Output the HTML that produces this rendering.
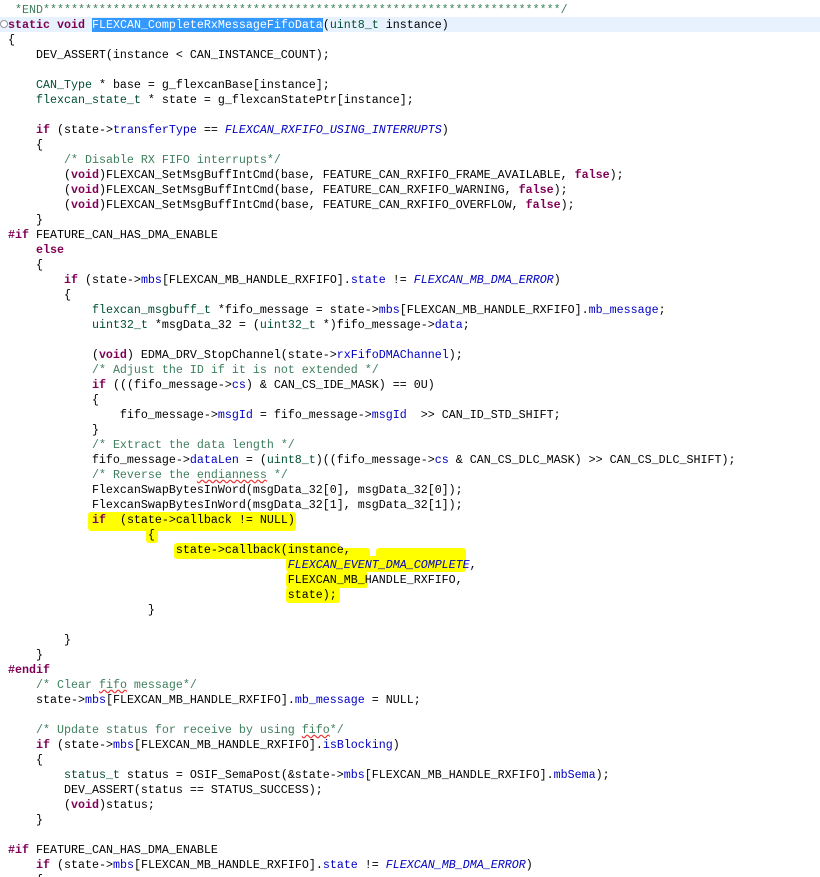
<!DOCTYPE html>
<html><head><meta charset="utf-8"><style>
html,body{margin:0;padding:0;background:#fff;width:820px;height:877px;overflow:hidden;position:relative}
pre{margin:0;position:absolute;left:8px;top:3px;font-family:"Liberation Mono",monospace;font-size:11.67px;line-height:15px;color:#000;z-index:2}
.k{color:#7f0055;font-weight:bold}
.t{color:#005032}
.f{color:#0000c0}
.e{color:#0000c0;font-style:italic}
.c{color:#3f7f5f}
.sel{background:#3399ff;color:#fff}
.sq{text-decoration:underline wavy #e33;text-decoration-skip-ink:none}
.hl{position:absolute;background:#ffff00;z-index:1;border-radius:3px}
.cur{position:absolute;left:0;top:17px;width:820px;height:15px;background:#e8f2fe;z-index:0}
</style></head><body>
<div class="cur"></div>
<div class="hl" style="left:88px;top:512px;width:208px;height:19px"></div>
<div class="hl" style="left:146px;top:529px;width:12px;height:14px"></div>
<div class="hl" style="left:174px;top:543px;width:166px;height:16px"></div>
<div class="hl" style="left:318px;top:548px;width:52px;height:16px"></div>
<div class="hl" style="left:286px;top:556px;width:180px;height:16px"></div>
<div class="hl" style="left:376px;top:548px;width:90px;height:12px"></div>
<div class="hl" style="left:286px;top:572px;width:82px;height:16px"></div>
<div class="hl" style="left:286px;top:587px;width:54px;height:16px"></div>
<div style="position:absolute;left:0;top:20px;width:8px;height:8px;border:1px solid #999;border-radius:50%;box-sizing:border-box;background:#fff;z-index:3"></div>
<pre><span class="c"> *END**************************************************************************/</span>
<span class="k">static</span> <span class="k">void</span> <span class="sel">FLEXCAN_CompleteRxMessageFifoData</span>(<span class="t">uint8_t</span> instance)
{
    DEV_ASSERT(instance &lt; CAN_INSTANCE_COUNT);

    <span class="t">CAN_Type</span> * base = g_flexcanBase[instance];
    <span class="t">flexcan_state_t</span> * state = g_flexcanStatePtr[instance];

    <span class="k">if</span> (state-&gt;<span class="f">transferType</span> == <span class="e">FLEXCAN_RXFIFO_USING_INTERRUPTS</span>)
    {
        <span class="c">/* Disable RX FIFO interrupts*/</span>
        (<span class="k">void</span>)FLEXCAN_SetMsgBuffIntCmd(base, FEATURE_CAN_RXFIFO_FRAME_AVAILABLE, <span class="k">false</span>);
        (<span class="k">void</span>)FLEXCAN_SetMsgBuffIntCmd(base, FEATURE_CAN_RXFIFO_WARNING, <span class="k">false</span>);
        (<span class="k">void</span>)FLEXCAN_SetMsgBuffIntCmd(base, FEATURE_CAN_RXFIFO_OVERFLOW, <span class="k">false</span>);
    }
<span class="k">#if</span> FEATURE_CAN_HAS_DMA_ENABLE
    <span class="k">else</span>
    {
        <span class="k">if</span> (state-&gt;<span class="f">mbs</span>[FLEXCAN_MB_HANDLE_RXFIFO].<span class="f">state</span> != <span class="e">FLEXCAN_MB_DMA_ERROR</span>)
        {
            <span class="t">flexcan_msgbuff_t</span> *fifo_message = state-&gt;<span class="f">mbs</span>[FLEXCAN_MB_HANDLE_RXFIFO].<span class="f">mb_message</span>;
            <span class="t">uint32_t</span> *msgData_32 = (<span class="t">uint32_t</span> *)fifo_message-&gt;<span class="f">data</span>;

            (<span class="k">void</span>) EDMA_DRV_StopChannel(state-&gt;<span class="f">rxFifoDMAChannel</span>);
            <span class="c">/* Adjust the ID if it is not extended */</span>
            <span class="k">if</span> (((fifo_message-&gt;<span class="f">cs</span>) &amp; CAN_CS_IDE_MASK) == 0U)
            {
                fifo_message-&gt;<span class="f">msgId</span> = fifo_message-&gt;<span class="f">msgId</span>  &gt;&gt; CAN_ID_STD_SHIFT;
            }
            <span class="c">/* Extract the data length */</span>
            fifo_message-&gt;<span class="f">dataLen</span> = (<span class="t">uint8_t</span>)((fifo_message-&gt;<span class="f">cs</span> &amp; CAN_CS_DLC_MASK) &gt;&gt; CAN_CS_DLC_SHIFT);
            <span class="c">/* Reverse the <span class="sq">endianness</span> */</span>
            FlexcanSwapBytesInWord(msgData_32[0], msgData_32[0]);
            FlexcanSwapBytesInWord(msgData_32[1], msgData_32[1]);
            <span class="k">if</span>  (state-&gt;callback != NULL)
                    {
                        state-&gt;callback(instance,
                                        <span class="e">FLEXCAN_EVENT_DMA_COMPLETE</span>,
                                        FLEXCAN_MB_HANDLE_RXFIFO,
                                        state);
                    }

        }
    }
<span class="k">#endif</span>
    <span class="c">/* Clear <span class="sq">fifo</span> message*/</span>
    state-&gt;<span class="f">mbs</span>[FLEXCAN_MB_HANDLE_RXFIFO].<span class="f">mb_message</span> = NULL;

    <span class="c">/* Update status for receive by using <span class="sq">fifo</span>*/</span>
    <span class="k">if</span> (state-&gt;<span class="f">mbs</span>[FLEXCAN_MB_HANDLE_RXFIFO].<span class="f">isBlocking</span>)
    {
        <span class="t">status_t</span> status = OSIF_SemaPost(&amp;state-&gt;<span class="f">mbs</span>[FLEXCAN_MB_HANDLE_RXFIFO].<span class="f">mbSema</span>);
        DEV_ASSERT(status == STATUS_SUCCESS);
        (<span class="k">void</span>)status;
    }

<span class="k">#if</span> FEATURE_CAN_HAS_DMA_ENABLE
    <span class="k">if</span> (state-&gt;<span class="f">mbs</span>[FLEXCAN_MB_HANDLE_RXFIFO].<span class="f">state</span> != <span class="e">FLEXCAN_MB_DMA_ERROR</span>)
    {
</pre>
</body></html>
